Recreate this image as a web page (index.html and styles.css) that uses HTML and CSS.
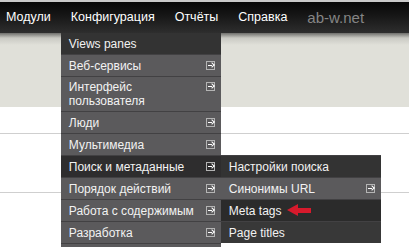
FILE: index.html
```html
<!DOCTYPE html>
<html lang="ru">
<head>
    <meta charset="UTF-8">
    <title>Конфигурация</title>
    <link rel="stylesheet" href="styles.css">
</head>
<body>
    <div class="topbar">
        <ul class="nav">
            <li class="nav-item">Модули</li>
            <li class="nav-item has-menu">Конфигурация
                <ul class="dropdown">
                    <li class="dd-item dd-first">Views panes</li>
                    <li class="dd-item">Веб-сервисы<span class="more"></span></li>
                    <li class="dd-item two-line">Интерфейс<br>пользователя<span class="more"></span></li>
                    <li class="dd-item">Люди<span class="more"></span></li>
                    <li class="dd-item">Мультимедиа<span class="more"></span></li>
                    <li class="dd-item dd-active">Поиск и метаданные<span class="more"></span>
                        <ul class="submenu">
                            <li class="dd-item sub-1">Настройки поиска</li>
                            <li class="dd-item sub-2">Синонимы URL<span class="more"></span></li>
                            <li class="dd-item sub-3">Meta tags<span class="pointer"></span></li>
                            <li class="dd-item sub-4">Page titles</li>
                        </ul>
                    </li>
                    <li class="dd-item">Порядок действий<span class="more"></span></li>
                    <li class="dd-item">Работа с содержимым<span class="more"></span></li>
                    <li class="dd-item">Разработка<span class="more"></span></li>
                </ul>
            </li>
            <li class="nav-item">Отчёты</li>
            <li class="nav-item">Справка</li>
            <li class="nav-item site">ab-w.net</li>
        </ul>
    </div>
    <div class="page">
        <div class="band"></div>
        <div class="row row-a"></div>
        <div class="row row-b"></div>
        <div class="row"></div>
    </div>
</body>
</html>
```

FILE: styles.css
```css
:root{
    --item-bg: #5b5a5c;
    --item-dark: #2e2d2e;
    --beige: #e0e0d9;
    --text: #f2f2f2;
}
*{
    padding: 0;
    margin: 0;
    box-sizing: border-box;
}
body{
    font-family: 'Liberation Sans', Arial, sans-serif;
    background-color: #fff;
    width: 409px;
    height: 247px;
    overflow: hidden;
}
ul{
    list-style: none;
}
.topbar{
    height: 33px;
    border-top: 2px solid #c9c9c9;
    background: linear-gradient(#080808, #151515 40%, #2e2e2e);
}
.nav{
    display: flex;
    height: 31px;
    align-items: center;
}
.nav-item{
    position: relative;
    color: #fff;
    font-size: 12.5px;
    line-height: 31px;
    padding: 0 10px;
}
.nav-item:first-child{
    padding-left: 6px;
}
.nav-item.site{
    font-size: 15px;
    color: #858585;
}
.dropdown{
    position: absolute;
    top: 31px;
    left: 0;
    width: 160px;
    padding-bottom: 8px;
    background-color: var(--item-bg);
    z-index: 2;
}
.dd-item{
    position: relative;
    display: block;
    color: var(--text);
    font-size: 12px;
    line-height: 14px;
    padding: 4px 8px 3px;
    border-top: 1px solid #424143;
    white-space: nowrap;
}
.dd-item.two-line{
    padding: 3px 8px;
}
.dropdown > .dd-item:last-child{
    border-bottom: 1px solid #424143;
}
.dd-first{
    border-top: none;
    background-color: #333;
}
.dd-active{
    background-color: var(--item-dark);
}
.more{
    position: absolute;
    top: 6px;
    right: 6px;
    width: 9px;
    height: 9px;
    border: 1px solid #b4b4b4;
}
.two-line .more{
    top: 5px;
}
.more::after{
    content: "";
    position: absolute;
    left: 1px;
    top: 3px;
    width: 4px;
    height: 1px;
    background-color: #fff;
}
.more::before{
    content: "";
    position: absolute;
    left: 3px;
    top: 1px;
    width: 3px;
    height: 3px;
    border-top: 1px solid #fff;
    border-right: 1px solid #fff;
    transform: rotate(45deg);
}
.submenu{
    position: absolute;
    top: -1px;
    left: 160px;
    width: 160px;
}
.sub-1{
    background-color: #333;
}
.sub-2{
    background-color: var(--item-bg);
}
.sub-3{
    background-color: #2b2b2b;
}
.sub-4{
    background-color: #383838;
}
.pointer{
    display: inline-block;
    position: relative;
    vertical-align: middle;
    margin: -4px 0 0 6px;
    width: 24px;
    height: 12px;
    background: linear-gradient(#d61a2c, #d61a2c) no-repeat 10px 4px / 14px 5px;
}
.pointer::before{
    content: "";
    position: absolute;
    left: 0;
    top: 0;
    border-top: 6px solid transparent;
    border-bottom: 6px solid transparent;
    border-right: 11px solid #d61a2c;
}
.band{
    height: 74px;
    background: linear-gradient(#6e6e6b, #c9c9c3 5px, var(--beige) 12px);
}
.row{
    height: 59px;
    border-top: 1px solid #cfcfcf;
}
.row-a{
    height: 26px;
    border-top: none;
}
```
